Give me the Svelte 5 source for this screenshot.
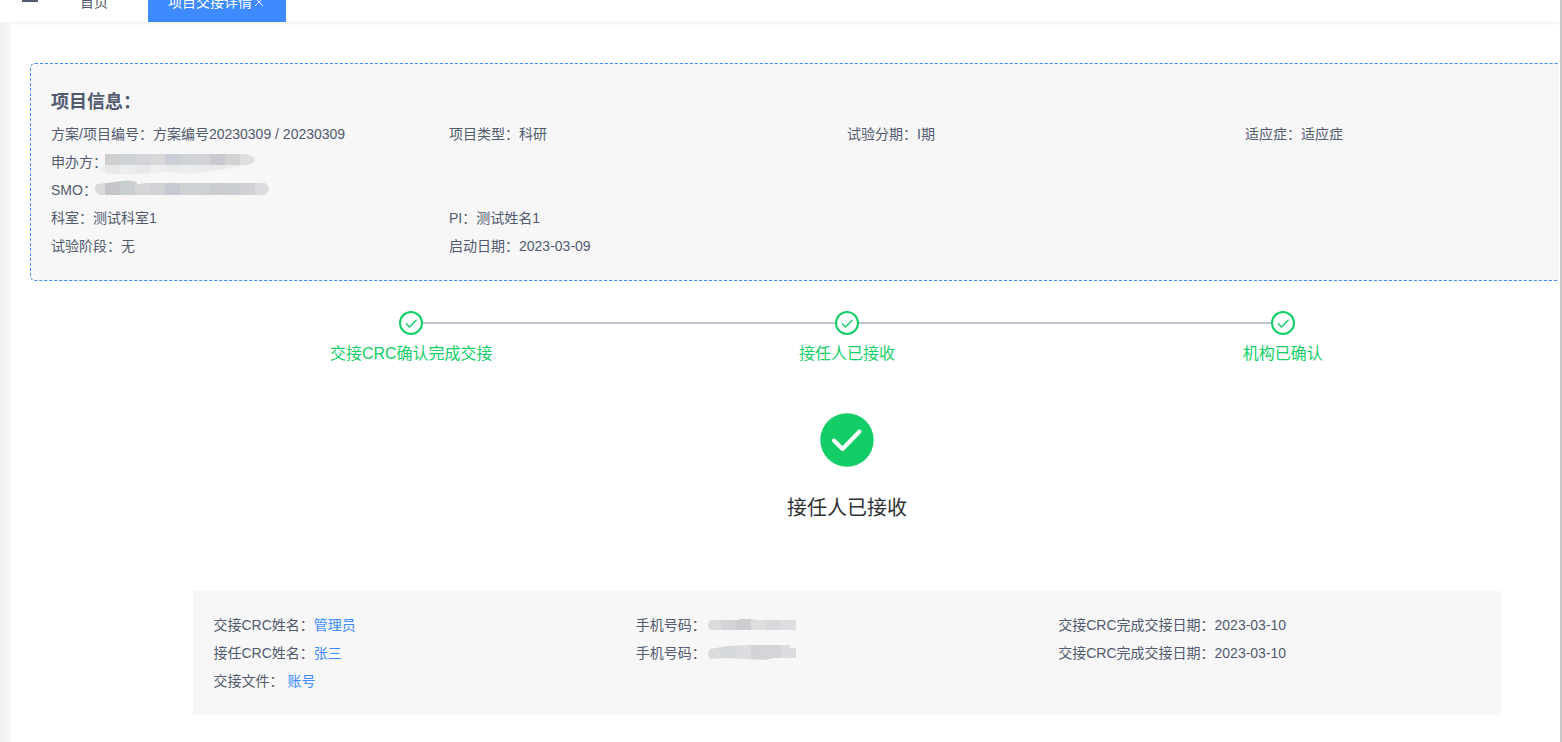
<script>
  const redactions = {
    sponsor: {
      width: 150,
      shape: "M-2 6H139Q149 9 149 13Q143 18 125 20L105 23Q79 27 61 24Q31 26 14 26L-8 25Q-10 20 -2 17Z",
      rows: [
        { y: 5, height: 12, x: -2, step: 15, colors: ["#cfcfd1", "#cdd2d6", "#d5d5d9", "#d9d7da", "#cbced6", "#d0d3d6", "#d2d3d8", "#c9cad1", "#d1d2d4", "#dfdfe1"] },
        { y: 17, height: 10, x: -17, step: 15, colors: ["#eff1f0", "#e8e8e9", "#ebedee", "#e8e7e9", "#eeeef0", "#ebebed", "#ebedee", "#eaebee", "#e9e9eb", "#eeeeee", "#f0f0f1"] },
      ],
    },
    smo: {
      width: 172,
      shape: "M0 8L18 6Q30 3 40 6V8L50 7H168Q176 12 168 19H3Q-5 15 0 8Z",
      rows: [
        { y: 4, height: 16, x: -7, step: 15, colors: ["#d9dadb", "#c4c5c8", "#c9ced1", "#d5d6d8", "#d0d2d5", "#c6c9d1", "#cfd2d4", "#ced1d4", "#cbccd0", "#cacdd1", "#d0d1d5", "#dadce0"] },
      ],
    },
    phone1: {
      width: 89,
      shape: "M4 9H33V8H49V9H90V19H4Q0 14 4 9Z",
      rows: [{ y: 8, height: 11, x: 0, step: 15, colors: ["#dcdcdb", "#d3d4d7", "#cdced2", "#dddee0", "#d8d9dd", "#dddee2"] }],
    },
    phone2: {
      width: 89,
      shape: "M4 10L21 7L45 6H84V9H90V19H67L59 21L21 19L4 20Q0 14 4 10Z",
      rows: [{ y: 6, height: 15, x: 0, step: 15, colors: ["#dcdcda", "#d5d9dd", "#dcdde0", "#d2d4d8", "#d4d5d9", "#dcdde1"] }],
    },
  };

  const projectInfo = [
    [
      { label: "方案/项目编号：", value: "方案编号20230309 / 20230309" },
      { label: "项目类型：", value: "科研" },
      { label: "试验分期：", value: "I期" },
      { label: "适应症：", value: "适应症" },
    ],
    [{ label: "申办方：", hidden: "sponsor" }],
    [{ label: "SMO：", hidden: "smo" }],
    [
      { label: "科室：", value: "测试科室1" },
      { label: "PI：", value: "测试姓名1" },
    ],
    [
      { label: "试验阶段：", value: "无" },
      { label: "启动日期：", value: "2023-03-09" },
    ],
  ];

  const steps = ["交接CRC确认完成交接", "接任人已接收", "机构已确认"];

  const handover = [
    [
      { label: "交接CRC姓名：", link: "管理员" },
      { label: "手机号码：", hidden: "phone1" },
      { label: "交接CRC完成交接日期：", value: "2023-03-10" },
    ],
    [
      { label: "接任CRC姓名：", link: "张三" },
      { label: "手机号码：", hidden: "phone2" },
      { label: "交接CRC完成交接日期：", value: "2023-03-10" },
    ],
    [{ label: "交接文件：", link: "账号", spaced: true }],
  ];
</script>

{#snippet field(item)}
  <div class="field">
    <dt>{item.label}</dt>
    <dd class:spaced={item.spaced}>
      {#if item.link}
        <a href="#detail">{item.link}</a>
      {:else if item.hidden}
        {@const mask = redactions[item.hidden]}
        <svg class="mask" width={mask.width} height="28" aria-hidden="true">
          <clipPath id={item.hidden}><path d={mask.shape} /></clipPath>
          <g clip-path="url(#{item.hidden})" shape-rendering="crispEdges">
            {#each mask.rows as row}
              {#each row.colors as color, i}
                <rect x={row.x + i * row.step} y={row.y} width={row.step} height={row.height} fill={color} />
              {/each}
            {/each}
          </g>
        </svg>
      {:else}
        {item.value}
      {/if}
    </dd>
  </div>
{/snippet}

<div class="layout">
  <header>
    <button class="menu" aria-label="菜单">
      <svg width="16" height="14" viewBox="0 0 16 14" fill="#515a6e">
        <path d="M0 0H16V2H0ZM0 6H16V8H0ZM0 12H16V14H0Z" />
      </svg>
    </button>
    <nav>
      <a class="tab" href="#home">首页</a>
      <div class="tab active">
        <a href="#detail">项目交接详情</a>
        <button class="close" aria-label="关闭">
          <svg width="14" height="14" viewBox="0 0 14 14" fill="none" stroke="currentColor">
            <path d="M3 3L11 11M11 3L3 11" />
          </svg>
        </button>
      </div>
    </nav>
  </header>

  <main>
    <div class="content">
      <section class="project">
        <h2>项目信息：</h2>
        {#each projectInfo as row}
          <dl class="quarters">
            {#each row as item}{@render field(item)}{/each}
          </dl>
        {/each}
      </section>

      <ol class="steps">
        {#each steps as step}
          <li>
            <svg width="24" height="24" viewBox="0 0 24 24" fill="none" stroke="#13ce66">
              <circle cx="12" cy="12" r="11" stroke-width="2" fill="#fff" />
              <path d="M7 12.5L10.5 16L17.5 9" stroke-width="1.3" />
            </svg>
            <span>{step}</span>
          </li>
        {/each}
      </ol>

      <section class="result">
        <svg width="64" height="64" viewBox="0 0 64 64" fill="none">
          <circle cx="32" cy="32" r="26.7" fill="#13ce66" />
          <path d="M19 32.5L27.5 41L44.5 23.5" stroke="#fff" stroke-width="4" stroke-linecap="round" stroke-linejoin="round" />
        </svg>
        <p>接任人已接收</p>
      </section>

      <section class="handover">
        {#each handover as row}
          <dl class="thirds">
            {#each row as item}{@render field(item)}{/each}
          </dl>
        {/each}
      </section>
    </div>
  </main>
</div>

<style>
  :global(body) {
    margin: 0;
  }

  .layout {
    display: flex;
    flex-direction: column;
    min-height: 100vh;
    box-sizing: border-box;
    border-right: 2px solid #c8c8c8;
    padding-right: 1px;
    background: #fff;
    color: #515a6e;
    font: 14px/28px "Liberation Sans", "Noto Sans CJK SC", sans-serif;
    overflow: hidden;
  }

  a {
    color: #3d8bff;
    text-decoration: none;
  }

  button {
    display: flex;
    border: 0;
    padding: 0;
    background: none;
    color: inherit;
    cursor: pointer;
  }

  /* the bar is scrolled partly out of view */
  header {
    display: flex;
    align-items: flex-end;
    height: 22px;
  }

  .menu {
    width: 60px;
    height: 34px;
    padding-left: 22px;
    align-items: flex-start;
  }

  nav {
    display: flex;
  }

  .tab {
    display: flex;
    align-items: center;
    height: 40px;
    padding: 0 20px;
    margin-right: 20px;
    color: #515a6e;
  }

  .active {
    background: #3d8bff;
  }

  .active,
  .active a {
    color: #fff;
  }

  main {
    flex: 1;
    padding-left: 10px;
    background: linear-gradient(to right, #eef0f2, #f5f7f9 8px, #f5f7f9 10px, #fff 10px);
    overflow: hidden;
  }

  /* wider than the window, the right side is cut off */
  .content {
    box-sizing: border-box;
    width: calc(100% + 125px);
    padding: 41px 20px 27px;
    box-shadow: inset 0 2px 3px #f3f3f3;
  }

  .project {
    padding: 20px;
    border: 1px dashed #3d8bff;
    border-radius: 5px;
    background: #f7f7f7;
  }

  h2 {
    margin: 0;
    font-size: 18px;
    line-height: 36px;
  }

  dl {
    display: grid;
    margin: 0;
  }

  .quarters {
    grid-template-columns: repeat(4, 1fr);
  }

  .thirds {
    grid-template-columns: repeat(3, 1fr);
  }

  .field {
    display: flex;
    height: 28px;
    white-space: nowrap;
  }

  dd {
    margin: 0;
  }

  .spaced {
    margin-left: 4px;
  }

  .mask {
    display: block;
    overflow: visible;
  }

  .steps {
    display: flex;
    width: 80%;
    margin: 30px auto 0;
    padding: 0;
    list-style: none;
  }

  .steps li {
    position: relative;
    flex: 1;
    display: flex;
    flex-direction: column;
    align-items: center;
    color: #13ce66;
    font-size: 16px;
    line-height: 38px;
  }

  .steps svg {
    position: relative;
    z-index: 1;
  }

  .steps li:not(:last-child)::after {
    content: "";
    position: absolute;
    top: 11px;
    left: 50%;
    width: 100%;
    height: 2px;
    background: #c0c4cc;
  }

  .result {
    display: flex;
    flex-direction: column;
    align-items: center;
    padding: 35px 0 67px;
  }

  .result p {
    margin: 20px 0 0;
    color: #303133;
    font-size: 20px;
    line-height: 32px;
  }

  .handover {
    box-sizing: border-box;
    width: 80%;
    margin: 0 auto;
    padding: 20px;
    background: #f7f7f7;
  }
</style>
